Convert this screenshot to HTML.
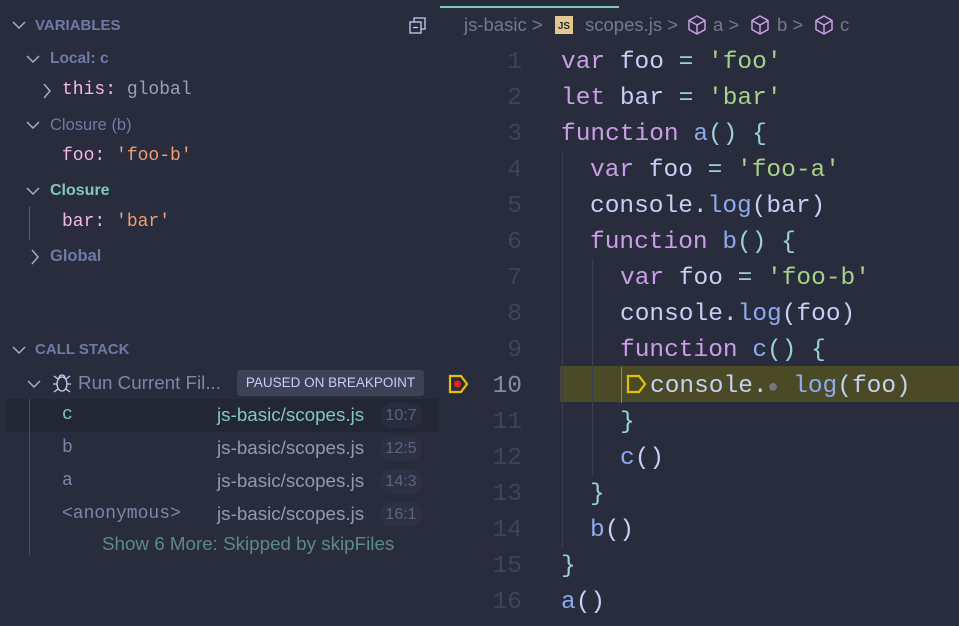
<!DOCTYPE html>
<html><head><style>
body{margin:0;width:959px;height:626px;background:#292c3c;overflow:hidden;position:relative;font-family:"Liberation Sans",sans-serif;}
.a{position:absolute;white-space:pre;}
.h{font-weight:bold;font-size:15px;color:#6f7aa6;}
.m{font-family:"Liberation Mono",monospace;}
.code{position:absolute;font-family:"Liberation Mono",monospace;font-size:24.5px;line-height:36px;white-space:normal;}
.row{position:relative;height:36px;}
.ln{position:absolute;left:470px;width:52px;text-align:right;color:#3f445c;}
.k{color:#ca9ee6}.t{color:#c6d0f5}.s{color:#a6d189}.f{color:#8caaee}.p{color:#99d1db}
.guide{position:absolute;width:1px;background:#3a3e52;}
.cs{font-size:18.8px;color:#7e86a8;}
.badge{position:absolute;left:380px;width:42px;height:25px;border-radius:12px;background:#2e3144;color:#5d6380;font-size:16px;text-align:center;line-height:25px;}
</style></head><body>
<svg class="a" style="left:12px;top:20px" width="14" height="10"><path d="M1 2l6 6 6-6" stroke="#a5adce" fill="none" stroke-width="1.5"/></svg>
<div class="a h" style="left:35px;top:17px">VARIABLES</div>
<svg class="a" style="left:408px;top:16px" width="20" height="20"><rect x="2" y="6" width="11" height="11" stroke="#c6d0f5" fill="none" stroke-width="1.3"/><path d="M6 6V2h11v11h-4M5 11.5h5" stroke="#c6d0f5" fill="none" stroke-width="1.3"/></svg>
<svg class="a" style="left:26px;top:54px" width="14" height="10"><path d="M1 2l6 6 6-6" stroke="#a5adce" fill="none" stroke-width="1.5"/></svg>
<div class="a h" style="left:50px;top:50px;font-size:15.5px">Local: c</div>
<svg class="a" style="left:42px;top:83px" width="10" height="16"><path d="M2 1l6 7-6 7" stroke="#a5adce" fill="none" stroke-width="1.5"/></svg>
<div class="a m" style="left:62px;top:80px;font-size:18px"><span style="color:#f4b8e4">this:</span> <span style="color:#99a0b8">global</span></div>
<svg class="a" style="left:26px;top:120px" width="14" height="10"><path d="M1 2l6 6 6-6" stroke="#a5adce" fill="none" stroke-width="1.5"/></svg>
<div class="a h" style="left:50px;top:116px;font-weight:normal;font-size:16.5px">Closure (b)</div>
<div class="a m" style="left:62px;top:146px;font-size:18px"><span style="color:#f4b8e4">foo:</span> <span style="color:#ef9f76">'foo-b'</span></div>
<svg class="a" style="left:26px;top:186px" width="14" height="10"><path d="M1 2l6 6 6-6" stroke="#a5adce" fill="none" stroke-width="1.5"/></svg>
<div class="a h" style="left:50px;top:182px;color:#81c8be;font-size:16px">Closure</div>
<div class="a" style="left:29px;top:207px;width:1px;height:33px;background:#5b6078"></div>
<div class="a m" style="left:62px;top:212px;font-size:18px"><span style="color:#f4b8e4">bar:</span> <span style="color:#ef9f76">'bar'</span></div>
<svg class="a" style="left:30px;top:249px" width="10" height="16"><path d="M2 1l6 7-6 7" stroke="#a5adce" fill="none" stroke-width="1.5"/></svg>
<div class="a h" style="left:50px;top:247px;font-size:16.5px">Global</div>
<svg class="a" style="left:12px;top:345px" width="14" height="10"><path d="M1 2l6 6 6-6" stroke="#a5adce" fill="none" stroke-width="1.5"/></svg>
<div class="a h" style="left:35px;top:341px">CALL STACK</div>
<svg class="a" style="left:27px;top:379px" width="14" height="10"><path d="M1 2l6 6 6-6" stroke="#a5adce" fill="none" stroke-width="1.5"/></svg>
<svg class="a" style="left:51px;top:372px" width="22" height="22"><ellipse cx="11" cy="12" rx="5" ry="7" stroke="#c6d0f5" fill="none" stroke-width="1.3"/><path d="M6 12h-4M16 12h4M7 7L3 4M15 7l4-3M7 17l-4 3M15 17l4 3M8 6a3 3 0 0 1 6 0" stroke="#c6d0f5" fill="none" stroke-width="1.3"/></svg>
<div class="a cs" style="left:78px;top:372px">Run Current Fil...</div>
<div class="a" style="left:237px;top:370px;width:187px;height:26px;background:#3e4256;border-radius:3px;color:#c6d0f5;font-size:13.5px;line-height:26px;text-align:center">PAUSED ON BREAKPOINT</div>
<div class="a" style="left:5px;top:399px;width:434px;height:33px;background:#232634"></div>
<div class="a" style="left:29px;top:399px;width:1px;height:156px;background:#4a4f66"></div>
<div class="a cs m" style="left:62px;top:405px;color:#81c8be;font-size:18px">c</div>
<div class="a cs" style="left:217px;top:404px;color:#81c8be">js-basic/scopes.js</div>
<div class="badge" style="top:403px;background:#292c3c">10:7</div>
<div class="a cs m" style="left:62px;top:438px;font-size:18px">b</div>
<div class="a cs" style="left:217px;top:437px;color:#9399b2">js-basic/scopes.js</div>
<div class="badge" style="top:436px">12:5</div>
<div class="a cs m" style="left:62px;top:471px;font-size:18px">a</div>
<div class="a cs" style="left:217px;top:470px;color:#9399b2">js-basic/scopes.js</div>
<div class="badge" style="top:469px">14:3</div>
<div class="a cs m" style="left:62px;top:504px;font-size:18px">&lt;anonymous&gt;</div>
<div class="a cs" style="left:217px;top:503px;color:#9399b2">js-basic/scopes.js</div>
<div class="badge" style="top:502px">16:1</div>
<div class="a cs" style="left:102px;top:533px;color:#5c8a8a">Show 6 More: Skipped by skipFiles</div>
<div class="a" style="left:440px;top:6px;width:179px;height:2px;background:#81c8be"></div>
<div class="a" style="left:464px;top:14px;font-size:18.5px;color:#737994">js-basic &gt;</div>
<div class="a" style="left:555px;top:16px;width:18px;height:18px;background:#e5c890;color:#292c3c;font-size:10px;font-weight:bold;line-height:22px;text-align:center">JS</div>
<div class="a" style="left:585px;top:14px;font-size:18.5px;color:#737994">scopes.js &gt;</div>
<svg class="a" style="left:687px;top:14px" width="22" height="22"><path d="M10 2l8 4.5v9L10 20l-8-4.5v-9zM2 6.5l8 4.5 8-4.5M10 11v9" stroke="#ca9ee6" fill="none" stroke-width="1.5"/></svg>
<div class="a" style="left:713px;top:14px;font-size:18.5px;color:#737994">a &gt;</div>
<svg class="a" style="left:750px;top:14px" width="22" height="22"><path d="M10 2l8 4.5v9L10 20l-8-4.5v-9zM2 6.5l8 4.5 8-4.5M10 11v9" stroke="#ca9ee6" fill="none" stroke-width="1.5"/></svg>
<div class="a" style="left:777px;top:14px;font-size:18.5px;color:#737994">b &gt;</div>
<svg class="a" style="left:814px;top:14px" width="22" height="22"><path d="M10 2l8 4.5v9L10 20l-8-4.5v-9zM2 6.5l8 4.5 8-4.5M10 11v9" stroke="#ca9ee6" fill="none" stroke-width="1.5"/></svg>
<div class="a" style="left:840px;top:14px;font-size:18.5px;color:#737994">c</div>
<div class="a" style="left:560px;top:366px;width:399px;height:36px;background:#4a4b26"></div>
<div class="guide" style="left:562px;top:151px;height:396px"></div>
<div class="guide" style="left:592px;top:259px;height:216px"></div>
<div class="guide" style="left:621px;top:367px;height:36px;background:#888a60"></div>
<svg class="a" style="left:448px;top:374px" width="22" height="20"><path d="M2 2h11l6 8-6 8H2z" stroke="#e5c000" fill="none" stroke-width="2.2"/><circle cx="9.5" cy="10" r="3.5" fill="#e22"/></svg>
<svg class="a" style="left:626px;top:374px" width="22" height="20"><path d="M2 2h11l6 8-6 8H2z" stroke="#e5c000" fill="none" stroke-width="2.2"/></svg>
<div class="code" style="left:0;top:45px;width:959px"><div class="row"><span class="ln">1</span><span class="a" style="left:561px"><span class="k">var</span> <span class="t">foo</span> <span class="p">=</span> <span class="s">'foo'</span></span></div><div class="row"><span class="ln">2</span><span class="a" style="left:561px"><span class="k">let</span> <span class="t">bar</span> <span class="p">=</span> <span class="s">'bar'</span></span></div><div class="row"><span class="ln">3</span><span class="a" style="left:561px"><span class="k">function</span> <span class="f">a</span><span class="p">() {</span></span></div><div class="row"><span class="ln">4</span><span class="a" style="left:590px"><span class="k">var</span> <span class="t">foo</span> <span class="p">=</span> <span class="s">'foo-a'</span></span></div><div class="row"><span class="ln">5</span><span class="a" style="left:590px"><span class="t">console.</span><span class="f">log</span><span class="t">(bar)</span></span></div><div class="row"><span class="ln">6</span><span class="a" style="left:590px"><span class="k">function</span> <span class="f">b</span><span class="p">() {</span></span></div><div class="row"><span class="ln">7</span><span class="a" style="left:620px"><span class="k">var</span> <span class="t">foo</span> <span class="p">=</span> <span class="s">'foo-b'</span></span></div><div class="row"><span class="ln">8</span><span class="a" style="left:620px"><span class="t">console.</span><span class="f">log</span><span class="t">(foo)</span></span></div><div class="row"><span class="ln">9</span><span class="a" style="left:620px"><span class="k">function</span> <span class="f">c</span><span class="p">() {</span></span></div><div class="row"><span class="ln" style="color:#838ba7">10</span><span class="a" style="left:650px"><span class="t">console.</span><span style="color:#777;font-size:18px">●</span> <span class="f">log</span><span class="t">(foo)</span></span></div><div class="row"><span class="ln">11</span><span class="a" style="left:620px"><span class="p">}</span></span></div><div class="row"><span class="ln">12</span><span class="a" style="left:620px"><span class="f">c</span><span class="t">()</span></span></div><div class="row"><span class="ln">13</span><span class="a" style="left:590px"><span class="p">}</span></span></div><div class="row"><span class="ln">14</span><span class="a" style="left:590px"><span class="f">b</span><span class="t">()</span></span></div><div class="row"><span class="ln">15</span><span class="a" style="left:561px"><span class="p">}</span></span></div><div class="row"><span class="ln">16</span><span class="a" style="left:561px"><span class="f">a</span><span class="t">()</span></span></div></div>
</body></html>
